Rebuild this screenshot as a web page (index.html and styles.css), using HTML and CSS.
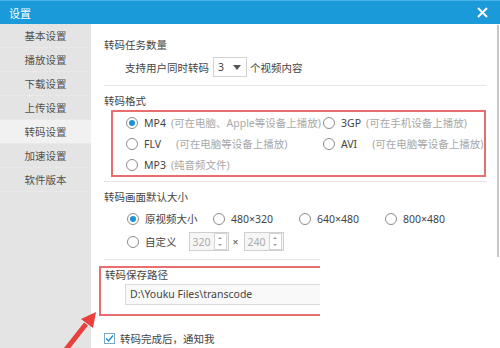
FILE: index.html
```html
<!DOCTYPE html>
<html>
    <head>
        <title>设置</title>
        <link rel="stylesheet" href="styles.css">
    </head>
    <body>
        <div class="window">
            <div class="titlebar">
                <span class="title">设置</span>
                <svg class="close" width="11" height="11" viewBox="0 0 11 11">
                    <path d="M1 1 L10 10 M10 1 L1 10" stroke="#fff" stroke-width="2" fill="none"/>
                </svg>
            </div>
            <div class="main">
                <ul class="sidebar">
                    <li>基本设置</li>
                    <li>播放设置</li>
                    <li>下载设置</li>
                    <li>上传设置</li>
                    <li class="active">转码设置</li>
                    <li>加速设置</li>
                    <li>软件版本</li>
                </ul>
                <div class="content">
                    <div class="heading first">转码任务数量</div>
                    <div class="row tasks">
                        <span>支持用户同时转码</span>
                        <span class="select">3 <span class="caret"></span></span>
                        <span>个视频内容</span>
                    </div>
                    <div class="sep"></div>

                    <div class="heading">转码格式</div>
                    <div class="mark formats">
                        <div class="opt"><span class="radio on"></span><span class="name">MP4</span><span class="desc">(可在电脑、Apple等设备上播放)</span></div>
                        <div class="opt"><span class="radio"></span><span class="name">3GP</span><span class="desc">(可在手机设备上播放)</span></div>
                        <div class="opt"><span class="radio"></span><span class="name">FLV</span><span class="desc wide">(可在电脑等设备上播放)</span></div>
                        <div class="opt"><span class="radio"></span><span class="name">AVI</span><span class="desc wide">(可在电脑等设备上播放)</span></div>
                        <div class="opt"><span class="radio"></span><span class="name">MP3</span><span class="desc">(纯音频文件)</span></div>
                    </div>
                    <div class="sep"></div>

                    <div class="heading">转码画面默认大小</div>
                    <div class="sizes">
                        <div class="opt size"><span class="radio on"></span><span class="name">原视频大小</span></div>
                        <div class="opt size"><span class="radio"></span><span class="name">480×320</span></div>
                        <div class="opt size"><span class="radio"></span><span class="name">640×480</span></div>
                        <div class="opt size"><span class="radio"></span><span class="name">800×480</span></div>
                    </div>
                    <div class="sizes">
                        <div class="opt"><span class="radio"></span><span class="name">自定义</span></div>
                        <span class="spin">320<span class="spinbtn"><i class="up"></i><i class="down"></i></span></span>
                        <span class="times">×</span>
                        <span class="spin">240<span class="spinbtn"><i class="up"></i><i class="down"></i></span></span>
                    </div>
                    <div class="sep short"></div>

                    <div class="mark path">
                        <div class="heading">转码保存路径</div>
                        <div class="pathbox">D:\Youku Files\transcode</div>
                    </div>

                    <div class="row notify">
                        <span class="check">
                            <svg width="9" height="9" viewBox="0 0 9 9"><path d="M1 4.5 L3.5 7 L8 1.5" stroke="#1a8fd6" stroke-width="1.4" fill="none"/></svg>
                        </span>
                        <span>转码完成后，通知我</span>
                    </div>
                </div>
            </div>
            <div class="scrollbar"></div>
            <svg class="arrow" width="110" height="60" viewBox="0 290 110 60">
                <path d="M64 352 L86 324" stroke="#e8403c" stroke-width="5" fill="none"/>
                <polygon points="96,312 81,319 93,328" fill="#e8403c"/>
            </svg>
        </div>
    </body>
</html>
```

FILE: styles.css
```css
body {
    margin: 0;
    padding: 0;
    font-family: "Noto Sans", "Noto Sans CJK SC", sans-serif;
    font-size: 10.5px;
    color: #444;
    background: #fff;
    overflow: hidden;
}

.window {
    position: relative;
    width: 500px;
    height: 348px;
    overflow: hidden;
}

.titlebar {
    height: 24px;
    background: #1a9ad9;
    border-top: 1px solid #4cb3e8;
    box-sizing: border-box;
    display: flex;
    align-items: center;
    justify-content: space-between;
    padding: 0 12px 0 9px;
    color: #fff;
}

.title {
    font-size: 11px;
}

.main {
    display: flex;
    height: 324px;
}

.sidebar {
    list-style-type: none;
    margin: 0;
    padding: 0;
    width: 91px;
    background: #e4e4e4;
    flex-shrink: 0;
}

.sidebar li {
    height: 24px;
    line-height: 24px;
    text-align: center;
    color: #505050;
    border-bottom: 1px solid #e9e9e9;
    box-sizing: border-box;
}

.sidebar li.active {
    background: #f1f1f1;
}

.content {
    flex: 1;
    padding-left: 13px;
}

.heading {
    line-height: 16px;
    margin-top: 7px;
}

.heading.first {
    margin-top: 13px;
}

.row {
    display: flex;
    align-items: center;
}

.tasks {
    margin: 4px 0 0 21px;
    height: 20px;
    gap: 4px;
}

.select {
    display: flex;
    align-items: center;
    justify-content: space-between;
    width: 34px;
    height: 20px;
    box-sizing: border-box;
    border: 1px solid #d2d2d2;
    padding: 0 5px 0 4px;
    margin-right: -1px;
}

.caret {
    width: 0;
    height: 0;
    border-left: 4px solid transparent;
    border-right: 4px solid transparent;
    border-top: 5px solid #555;
}

.sep {
    height: 1px;
    background: #e6e6e6;
    width: 383px;
    margin-top: 8px;
}

.mark {
    border: 2px solid #e76f70;
}

.formats {
    margin: 1px 0 0 7px;
    width: 375px;
    box-sizing: border-box;
    padding-left: 13px;
    display: grid;
    grid-template-columns: 197px 1fr;
    grid-auto-rows: 21px;
}

.formats + .sep {
    margin-top: 4px;
}

.opt {
    display: flex;
    align-items: center;
}

.radio {
    width: 12px;
    height: 12px;
    box-sizing: border-box;
    border: 1px solid #8c8c8c;
    border-radius: 50%;
    background: #fff;
    display: flex;
    align-items: center;
    justify-content: center;
    flex-shrink: 0;
}

.radio.on::after {
    content: '';
    width: 6px;
    height: 6px;
    border-radius: 50%;
    background: #1a93dc;
}

.name {
    margin-left: 6px;
}

.desc {
    margin-left: 5px;
    color: #a8a8a8;
}

.desc.wide {
    margin-left: 15px;
}

.sizes {
    display: flex;
    align-items: center;
    height: 23px;
    margin-left: 23px;
}

.sep + .heading + .sizes {
    margin-top: 2px;
}

.size {
    width: 86px;
}

.spin {
    display: flex;
    align-items: center;
    justify-content: space-between;
    width: 40px;
    height: 19px;
    box-sizing: border-box;
    border: 1px solid #cfcfcf;
    background: #f6f6f6;
    color: #ababab;
    padding-left: 3px;
    margin-left: 12px;
}

.spin + .times + .spin {
    margin-left: 5px;
}

.spinbtn {
    display: flex;
    flex-direction: column;
    justify-content: space-around;
    align-items: center;
    width: 11px;
    height: 15px;
    border: 1px solid #d4d4d4;
    background: #fff;
    margin-right: 1px;
}

.spinbtn i {
    width: 0;
    height: 0;
    border-left: 2px solid transparent;
    border-right: 2px solid transparent;
}

.spinbtn .up {
    border-bottom: 2px solid #999;
}

.spinbtn .down {
    border-top: 2px solid #999;
}

.times {
    margin-left: 4px;
    color: #555;
}

.sep.short {
    width: 216px;
    margin-top: 6px;
}

.path {
    margin: 6px 0 0 -5px;
    width: 221px;
    box-sizing: border-box;
    border-right: none;
    padding: 0 0 9px 4px;
}

.path .heading {
    margin-top: 0;
    line-height: 14px;
}

.pathbox {
    margin: 2px 0 0 20px;
    height: 21px;
    line-height: 19px;
    box-sizing: border-box;
    border: 1px solid #dadada;
    border-right: none;
    background: #f9f9f9;
    padding-left: 4px;
    white-space: nowrap;
    overflow: hidden;
}

.notify {
    margin-top: 14px;
    height: 16px;
    gap: 5px;
}

.check {
    width: 11px;
    height: 11px;
    box-sizing: border-box;
    border: 1px solid #7aa9c9;
    background: #fff;
    display: flex;
    align-items: center;
    justify-content: center;
}

.scrollbar {
    position: absolute;
    right: 1px;
    top: 25px;
    width: 2px;
    height: 232px;
    background: #c8c8c8;
}

.arrow {
    position: absolute;
    left: 0;
    top: 290px;
}
```
